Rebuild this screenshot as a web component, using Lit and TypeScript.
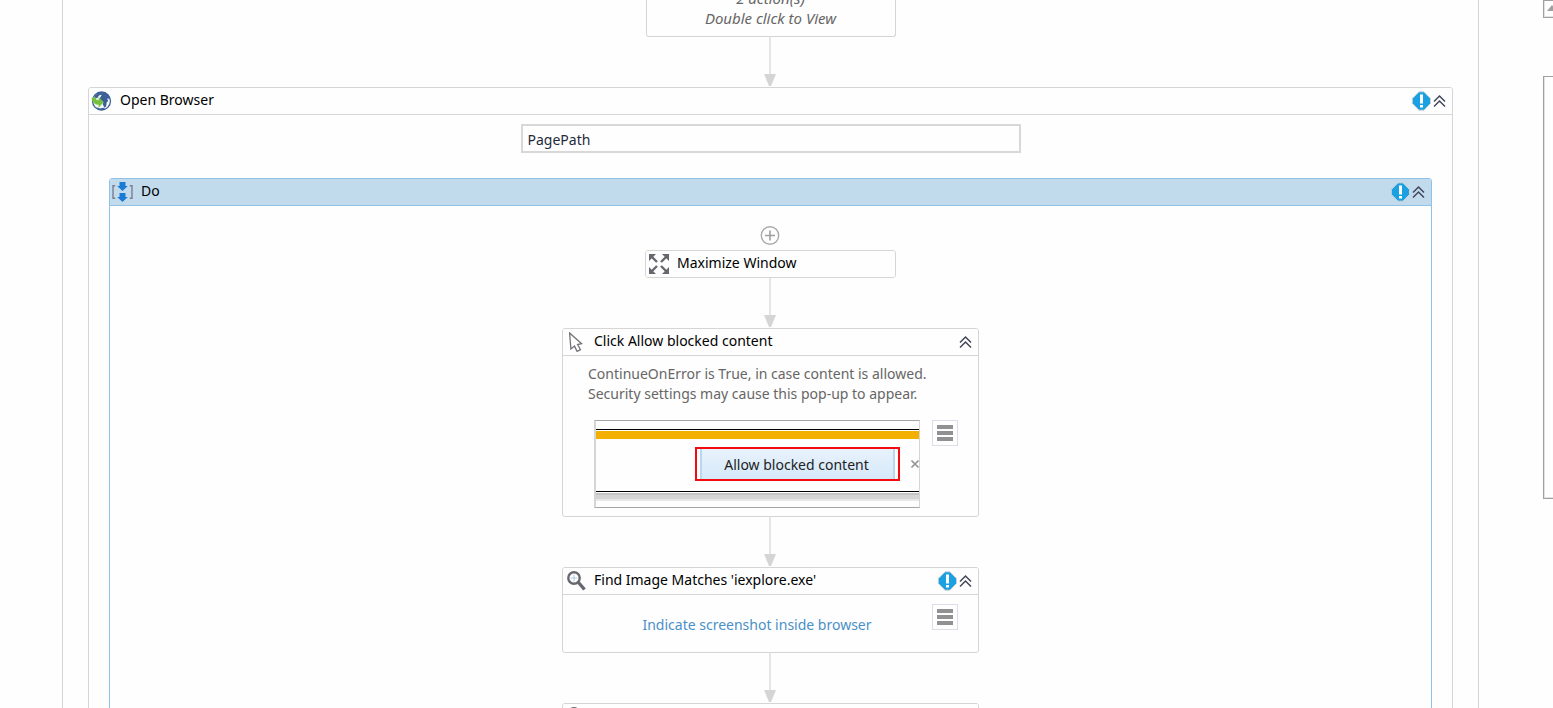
import { LitElement, html, css, svg, nothing } from "lit";
import { customElement, property } from "lit/decorators.js";

const icons: Record<string, unknown> = {
  globe: svg`<circle cx="10.500" cy="10" r="9" fill="#f4f8fb" stroke="#3c5f96" stroke-width="1.300"/>
    <path d="M4 4.500Q7 .8 12 1.200l-1 2-3 1.200-1.500 2.400L3 8z" fill="#3c5f96"/>
    <path d="M10 2.400l4-.8 3.400 2.200 1.600 3.800-.9 1.100-.9-1.400-1 .5 1 2.200-1.600 1.600-.4 3.600-1.800 1.600-1.500-3.400.3-2.600-2.600-1-1-2.600 1.800-2.400z" fill="#3c5f96"/>
    <path d="M5 16l4 1.400 3.500-.6 1.500 1-3.500 1.200Q7.200 19 5 16z" fill="#3c5f96"/>
    <path d="M.8 7.200l3.400-.8 1.200 2.500 2.400.4V6.400l4.600 5-4.600 4.800v-2.500C4 13.600 1.400 11.600.8 7.200z" fill="#76bf3b" stroke="#8fd255" stroke-width=".5"/>`,
  sequence: svg`<path d="M3.200 3.700H1V16.300h2.200M17.800 3.700H20V16.300h-2.200" fill="none" stroke="#7c7c8e" stroke-width="1.400"/>
    <path d="M7.500 0h6v4h2.300l-5.300 5-5.300-5h2.300zM7.500 11h6v4h2.300l-5.300 5-5.300-5h2.300z" fill="#1b7bd4"/>`,
  maximize: svg`<g fill="#67676f"><path d="M1 0h7L1 7zM21 0v7l-7-7zM1 20v-7l7 7zM21 20h-7l7-7z"/></g>
    <path d="M3.500 2.500L9 8M18.500 2.500L13 8M3.500 17.500L9 12M18.500 17.500L13 12" stroke="#67676f" stroke-width="2.400"/>`,
  cursor: svg`<path d="M4.600.9l12 10.800-4 .8 2.900 5.200-3.400 1.700-2.600-5.300-3.600 2.900z" fill="#fff" stroke="#74747a" stroke-width="1.300"/>`,
  search: svg`<circle cx="9" cy="7" r="5.700" fill="#fff" stroke="#67676f" stroke-width="2.400"/>
    <path d="M5.500 7h7M9 3.500v7" stroke="#a9c8de" stroke-width="1"/><path d="M13.500 11.500l6 7" stroke="#67676f" stroke-width="3.400"/>`,
};

@customElement("flow-arrow")
class FlowArrow extends LitElement {
  static styles = css`
    :host { display: flex; justify-content: center; height: 50px; }
    svg { width: 13px; height: 50px; }
  `;
  render() {
    return html`<svg viewBox="0 0 13 50" aria-hidden="true"><path d="M5 0h2v38H5z" fill="#e6e6e6"/><path d="M0 37h12L7 49H5z" fill="#d5d5d5"/></svg>`;
  }
}

@customElement("activity-card")
class ActivityCard extends LitElement {
  @property() heading = "";
  @property() icon = "";
  @property({ type: Boolean }) info = false;
  @property({ type: Boolean }) collapsible = false;
  @property({ type: Boolean }) bare = false;
  @property({ type: Boolean, reflect: true }) selected = false;

  static styles = css`
    :host { display: block; --line: #d5d5d5; --head: #fefefe; }
    :host([selected]) { --line: #90c1e7; --head: #c1dbed; }
    .card { border: 1px solid var(--line); border-radius: 3px; background: #fefefe; overflow: hidden; }
    .head { display: flex; align-items: center; height: 26px; padding: 0 5px 0 2px; background: var(--head); }
    .ruled { border-bottom: 1px solid var(--line); }
    .icon { width: 21px; height: 20px; flex: none; }
    .title { flex: 1; margin: 0 0 0 8px; padding-bottom: 2px; font-size: 14px; line-height: 20px; font-weight: 400; color: #000; white-space: nowrap; }
    .info { width: 20px; height: 20px; flex: none; }
    .toggle { display: flex; border: 0; padding: 0; background: none; }
    .toggle svg { width: 16px; height: 16px; }
  `;
  render() {
    return html`<section class="card">
      <header class="head ${this.bare ? "" : "ruled"}">
        <svg class="icon" viewBox="0 0 21 20" aria-hidden="true">${icons[this.icon]}</svg>
        <h2 class="title">${this.heading}</h2>
        ${this.info
          ? html`<svg class="info" viewBox="0 0 20 20" role="img" aria-label="Information">
              <path d="M8 .8h5L19.500 7.500v5L13 19.200H8L1.300 12.500v-5z" fill="#1ba1e2" stroke="#d3d3d3"/>
              <path d="M9 3.500h3v9H9zM9 14h3v2.500H9z" fill="#fff"/></svg>`
          : nothing}
        ${this.collapsible
          ? html`<button class="toggle" aria-label="Collapse">
              <svg viewBox="0 0 16 16"><path d="M3 8.500L8.500 3 14 8.500M3 13.500L8.500 8l5.500 5.500" fill="none" stroke="#42475a" stroke-width="1.500"/></svg>
            </button>`
          : nothing}
      </header>
      <slot></slot>
    </section>`;
  }
}

@customElement("options-button")
class OptionsButton extends LitElement {
  static styles = css`
    :host { display: block; }
    .button { display: flex; align-items: center; justify-content: center; width: 26px; height: 26px; padding: 0; border: 1px solid #dcdcea; background: #fefefe; }
    svg { width: 16px; height: 16px; flex: none; }
  `;
  render() {
    return html`<button class="button" aria-label="Options">
      <svg viewBox="0 0 16 16"><path d="M0 0h16v4H0zM0 6h16v4H0zM0 12h16v4H0z" fill="#919191"/></svg>
    </button>`;
  }
}

@customElement("app-root")
class AppRoot extends LitElement {
  static styles = css`
    :host { display: block; height: 100vh; overflow: hidden; background: #fefefe; font-family: "Segoe UI", "Noto Sans", sans-serif; font-size: 14px; line-height: 20px; color: #666; }
    .workspace { display: flex; }
    .canvas { flex: 1; min-width: 0; margin-left: 62px; padding: 0 25px; border: solid #d5d5d5; border-width: 0 1px; }
    .summary { display: flex; flex-direction: column; justify-content: flex-end; box-sizing: border-box; width: 250px; height: 37px; margin: 0 auto; padding-bottom: 8px; overflow: hidden; border: 1px solid #d5d5d5; border-top: 0; border-radius: 0 0 3px 3px; text-align: center; font-size: 15px; font-style: italic; }
    .summary p { flex: none; margin: 0; }
    .browser { padding: 9px 20px 0; }
    .path { display: block; box-sizing: border-box; width: 500px; height: 29px; margin: 0 auto 25px; padding: 2px 5px 0; border: 2px solid #d8d8d8; border-radius: 0; background: #fefefe; font: inherit; color: #1e2a3c; }
    .steps { display: flex; flex-direction: column; align-items: center; padding: 20px 0; }
    .add { display: flex; margin-bottom: 5px; padding: 0; border: 0; background: none; }
    .add svg { width: 21px; height: 19px; }
    .small { width: 251px; }
    .wide { width: 417px; }
    .note { margin: 8px 25px 16px; }
    .target { display: grid; grid-template-columns: 1fr 26px; gap: 12px; align-items: start; padding: 0 20px 8px 31px; }
    .indicate { padding-top: 9px; padding-bottom: 6px; }
    .link { justify-self: center; line-height: 42px; color: #4a90c8; text-decoration: none; white-space: nowrap; }
    .shot { box-sizing: border-box; height: 88px; margin: 0; padding-top: 8px; overflow: hidden; border: solid #a6a6a6; border-width: 1px 1px 1px 2px; border-left-color: #d5d5d5; border-right-color: #d5d5d5; }
    .bar { height: 8px; border-top: 1px solid #000; padding-top: 1px; background: #f3b000 content-box; }
    .row { display: flex; align-items: center; justify-content: flex-end; box-sizing: border-box; height: 52px; padding-bottom: 2px; }
    .marked { padding: 0 3px; border: 2px solid #f40b0f; }
    .allow { display: block; box-sizing: border-box; width: 195px; height: 30px; padding: 2px 2px 0 0; border: solid #b9d7f1; border-width: 0 2px; background: linear-gradient(#e8f2fb, #d6e9fa); font: inherit; color: #222; white-space: nowrap; }
    .close { width: 8px; height: 8px; margin-left: 11px; }
    .shade { height: 2px; padding-top: 1px; border-top: 1px solid #000; border-bottom: 4px solid #d5d5d5; background: #c4c4c4 content-box; box-shadow: 0 2px #e8e8e8; }
    .more { height: 60px; }
    .rail { width: 10px; margin-left: 64px; overflow: hidden; }
    .scroll { display: flex; align-items: flex-start; box-sizing: border-box; width: 18px; height: 18px; margin-bottom: 58px; padding: 4px 0 0 3px; border: 1px solid #a0a0a0; background: #fefefe; box-shadow: inset 1px -1px #e2e2e2; }
    .scroll svg { width: 10px; height: 6px; flex: none; }
    .outline { box-sizing: border-box; width: 18px; height: 423px; border: 1px solid #a0a0a0; box-shadow: inset 1px -1px #e2e2e2; }
  `;
  render() {
    return html`<div class="workspace">
      <main class="canvas">
        <div class="summary"><p>2 action(s)</p><p>Double click to View</p></div>
        <flow-arrow></flow-arrow>
        <activity-card heading="Open Browser" icon="globe" info collapsible>
          <div class="browser">
            <input class="path" aria-label="URL" .value=${"PagePath"} />
            <activity-card heading="Do" icon="sequence" info collapsible selected>
              <div class="steps">
                <button class="add" aria-label="Add activity">
                  <svg viewBox="0 0 21 19"><circle cx="10" cy="9.500" r="8.700" fill="none" stroke="#a9a9a9" stroke-width="1.400"/><path d="M10 4.500v10M5 9.500h10" stroke="#a0a0a0" stroke-width="1.600"/></svg>
                </button>
                <activity-card class="small" heading="Maximize Window" icon="maximize" bare></activity-card>
                <flow-arrow></flow-arrow>
                <activity-card class="wide" heading="Click Allow blocked content" icon="cursor" collapsible>
                  <p class="note">ContinueOnError is True, in case content is allowed.<br />Security settings may cause this pop-up to appear.</p>
                  <div class="target">
                    <figure class="shot">
                      <div class="bar"></div>
                      <div class="row">
                        <div class="marked"><button class="allow">Allow blocked content</button></div>
                        <svg class="close" viewBox="0 0 8 8" aria-hidden="true"><path d="M.5.5l7 7M7.500.5l-7 7" stroke="#999" stroke-width="1.600"/></svg>
                      </div>
                      <div class="shade"></div>
                    </figure>
                    <options-button></options-button>
                  </div>
                </activity-card>
                <flow-arrow></flow-arrow>
                <activity-card class="wide" heading="Find Image Matches 'iexplore.exe'" icon="search" info collapsible>
                  <div class="target indicate">
                    <a class="link" href="#">Indicate screenshot inside browser</a>
                    <options-button></options-button>
                  </div>
                </activity-card>
                <flow-arrow></flow-arrow>
                <activity-card class="wide" icon="search"><div class="more"></div></activity-card>
              </div>
            </activity-card>
          </div>
        </activity-card>
      </main>
      <aside class="rail">
        <button class="scroll" aria-label="Scroll up"><svg viewBox="0 0 10 6"><path d="M5 0l5 6H0z" fill="#a0a0a0"/></svg></button>
        <div class="outline"></div>
      </aside>
    </div>`;
  }
}
